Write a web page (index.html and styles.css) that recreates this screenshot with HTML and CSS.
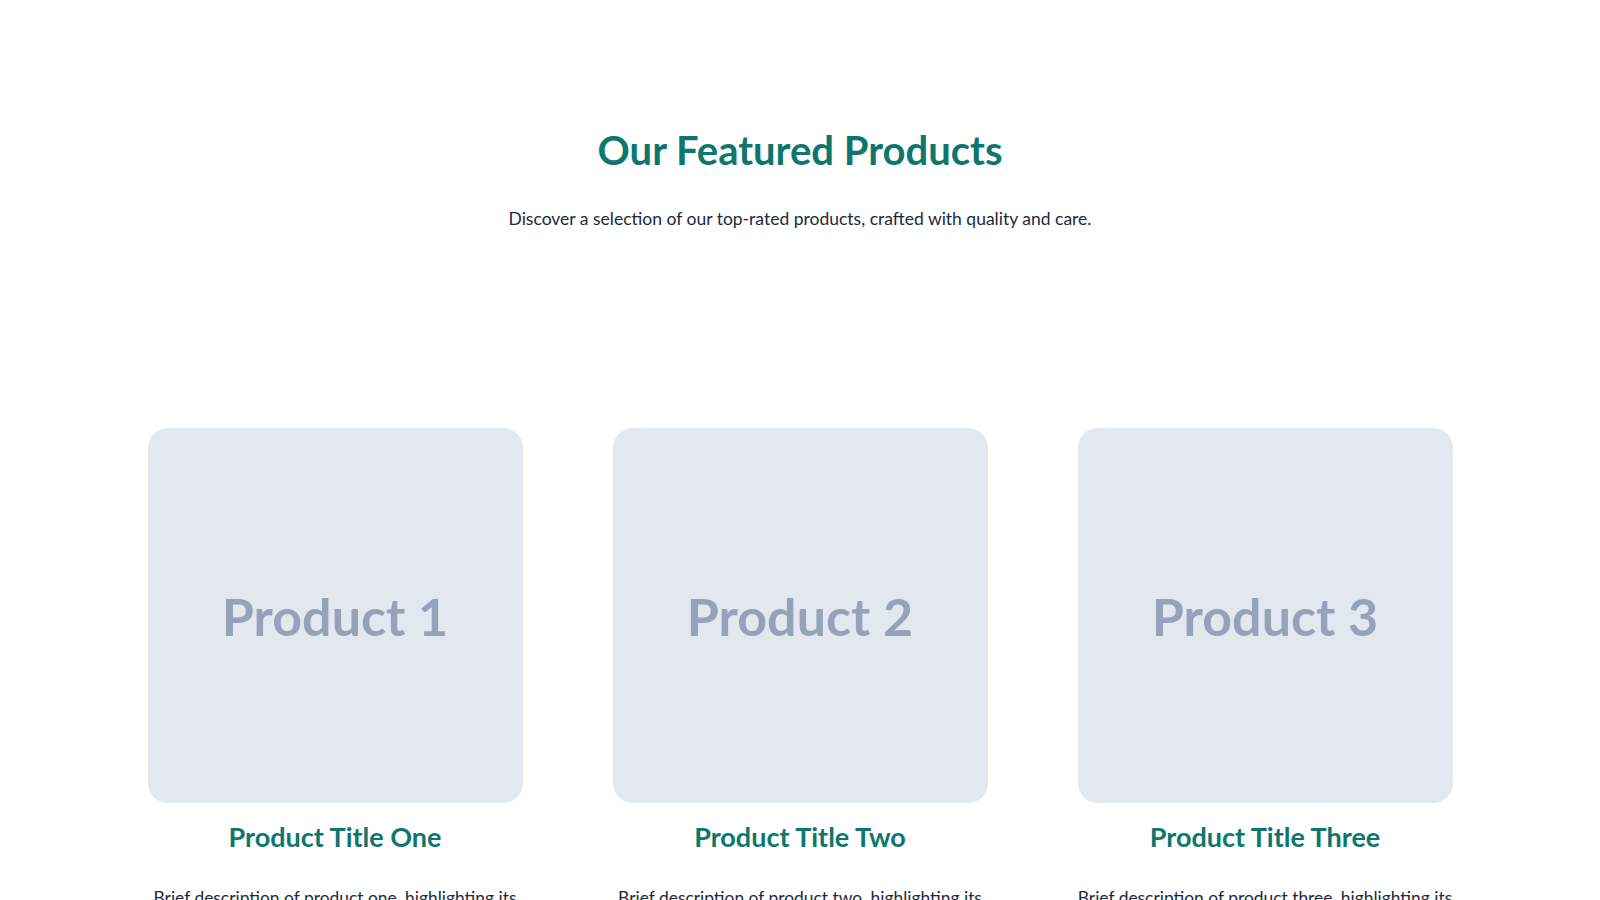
FILE: index.html
```html
<!DOCTYPE html>
<html lang="en">
<head>
<meta charset="utf-8">
<title>Our Featured Products</title>
<link rel="stylesheet" href="styles.css">
</head>
<body>
<section class="featured">
  <header class="featured-header">
    <h1 class="featured-title">Our Featured Products</h1>
    <p class="featured-subtitle">Discover a selection of our top-rated products, crafted with quality and care.</p>
  </header>
  <div class="product-grid">
    <article class="product-card">
      <div class="product-image"><span>Product 1</span></div>
      <h2 class="product-title">Product Title One</h2>
      <p class="product-desc">Brief description of product one, highlighting its key features and benefits for you.</p>
    </article>
    <article class="product-card">
      <div class="product-image"><span>Product 2</span></div>
      <h2 class="product-title">Product Title Two</h2>
      <p class="product-desc">Brief description of product two, highlighting its key features and benefits for you.</p>
    </article>
    <article class="product-card">
      <div class="product-image"><span>Product 3</span></div>
      <h2 class="product-title">Product Title Three</h2>
      <p class="product-desc">Brief description of product three, highlighting its key features and benefits for you.</p>
    </article>
  </div>
</section>
</body>
</html>
```

FILE: styles.css
```css
* { box-sizing: border-box; }
html, body { margin: 0; padding: 0; background: #ffffff; }
body {
  font-family: "Lato", "Noto Sans", sans-serif;
  color: #1e293b;
}
.featured {
  padding-top: 126px;
}
.featured-header {
  text-align: center;
}
.featured-title {
  margin: 0;
  font-size: 40px;
  line-height: 1.2;
  font-weight: 700;
  color: #0f766e;
}
.featured-subtitle {
  margin: 32px 0 0;
  font-size: 17.5px;
  line-height: 1.5;
  color: #1e293b;
}
.product-grid {
  display: grid;
  grid-template-columns: repeat(3, 1fr);
  gap: 90px;
  max-width: 1305px;
  margin: 196px auto 0;
}
.product-card {
  text-align: center;
}
.product-image {
  aspect-ratio: 1 / 1;
  background: #e2e8f0;
  border-radius: 20px;
  display: flex;
  align-items: center;
  justify-content: center;
}
.product-image span {
  font-family: "Lato", sans-serif;
  font-weight: 700;
  font-size: 52px;
  color: #94a3b8;
}
.product-title {
  margin: 16px 0 0;
  font-size: 27px;
  line-height: 1.3;
  font-weight: 700;
  color: #0f766e;
}
.product-desc {
  margin: 31px -4px 0;
  font-size: 17.4px;
  line-height: 1.5;
  color: #1e293b;
}
```
